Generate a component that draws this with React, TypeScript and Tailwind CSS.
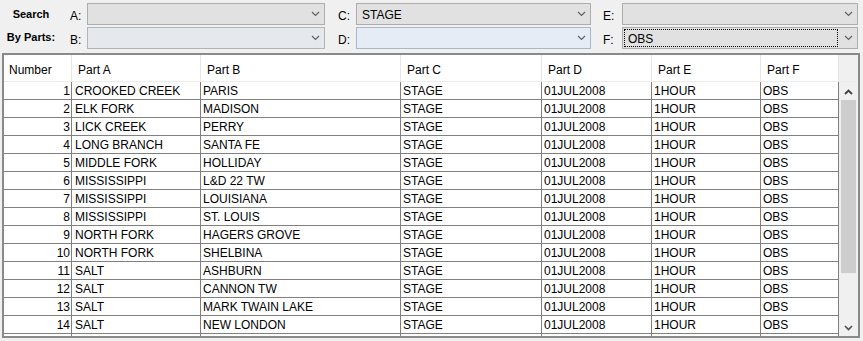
import React from 'react';

const rows: string[][] = [
  ['1', 'CROOKED CREEK', 'PARIS'],
  ['2', 'ELK FORK', 'MADISON'],
  ['3', 'LICK CREEK', 'PERRY'],
  ['4', 'LONG BRANCH', 'SANTA FE'],
  ['5', 'MIDDLE FORK', 'HOLLIDAY'],
  ['6', 'MISSISSIPPI', 'L&D 22 TW'],
  ['7', 'MISSISSIPPI', 'LOUISIANA'],
  ['8', 'MISSISSIPPI', 'ST. LOUIS'],
  ['9', 'NORTH FORK', 'HAGERS GROVE'],
  ['10', 'NORTH FORK', 'SHELBINA'],
  ['11', 'SALT', 'ASHBURN'],
  ['12', 'SALT', 'CANNON TW'],
  ['13', 'SALT', 'MARK TWAIN LAKE'],
  ['14', 'SALT', 'NEW LONDON'],
  ['', '', ''],
];

const columns = [
  { title: 'Number', width: 'w-[68px]', head: 'pl-[5px]' },
  { title: 'Part A', width: 'w-[129px]', head: 'pl-[6px]' },
  { title: 'Part B', width: 'w-[200px]', head: 'pl-[6px]' },
  { title: 'Part C', width: 'w-[141px]', head: 'pl-[6px]' },
  { title: 'Part D', width: 'w-[110px]', head: 'pl-[6px]' },
  { title: 'Part E', width: 'w-[109px]', head: 'pl-[6px]' },
  { title: 'Part F', width: 'w-[78px]', head: 'pl-[6px]' },
];

function ChevronDown({ color = '#606060', width = 1.2 }: { color?: string; width?: number }) {
  return (
    <svg width="9" height="6" viewBox="0 0 9 6">
      <path d="M1 1 L4.5 4.5 L8 1" fill="none" stroke={color} strokeWidth={width} />
    </svg>
  );
}

function ChevronUp({ color = '#404040', width = 1.8 }: { color?: string; width?: number }) {
  return (
    <svg width="9" height="6" viewBox="0 0 9 6">
      <path d="M1 5 L4.5 1.5 L8 5" fill="none" stroke={color} strokeWidth={width} />
    </svg>
  );
}

function Combo({
  value,
  bg = 'bg-[#e1e1e1]',
  border = 'border-[#adadad]',
  focused = false,
}: {
  value?: string;
  bg?: string;
  border?: string;
  focused?: boolean;
}) {
  return (
    <div className={`h-[22px] flex items-stretch border ${border} ${bg}`}>
      <div className="flex-1 p-[1px] flex">
        <div
          className={`flex-1 flex items-center pl-[3px] pt-[1px] text-[12px] text-black ${
            focused ? 'border border-dotted border-black' : 'border border-transparent'
          }`}
        >
          {value}
        </div>
      </div>
      <div className="w-[18px] flex items-center justify-center">
        <ChevronDown />
      </div>
    </div>
  );
}

function Label({ text }: { text: string }) {
  return <div className="text-[12px] text-black flex items-center pt-[3px]">{text}</div>;
}

export default function App() {
  return (
    <div
      className="w-[863px] h-[341px] bg-[#f0f0f0] overflow-hidden"
      style={{ fontFamily: '"Liberation Sans", Arial, sans-serif' }}
    >
      <div className="grid grid-cols-[70px_17px_238px_13px_18px_235px_12px_19px_236px] grid-rows-[22px_22px] gap-y-[2px] pt-[3px]">
        <div className="pr-[8px] text-center text-[11px] font-bold text-black flex items-center justify-center">
          Search
        </div>
        <Label text="A:" />
        <Combo />
        <div />
        <Label text="C:" />
        <Combo value="STAGE" />
        <div />
        <Label text="E:" />
        <Combo />

        <div className="pr-[8px] text-center text-[11px] font-bold text-black flex items-center justify-center pb-[2px]">
          By Parts:
        </div>
        <Label text="B:" />
        <Combo bg="bg-[#e5e9ee]" border="border-[#b0b4b8]" />
        <div />
        <Label text="D:" />
        <Combo bg="bg-[#e5ecf6]" border="border-[#a9b8c9]" />
        <div />
        <Label text="F:" />
        <Combo value="OBS" focused />
      </div>

      <div className="mt-[4px] ml-[2px] w-[858px] h-[285px] border-2 border-[#8a8a8a] flex flex-col bg-white">
        <div className="h-[27px] flex shrink-0 border-b border-[#ececec]">
          {columns.map((c) => (
            <div
              key={c.title}
              className={`${c.width} ${c.head} border-r border-[#e5e5e5] flex items-end pb-[2px] text-[12px] text-black`}
            >
              {c.title}
            </div>
          ))}
          <div className="flex-1 bg-[#f0f0f0]" />
        </div>

        <div className="flex flex-1 min-h-0">
          <div className="w-[835px] overflow-hidden">
            {rows.map((r, i) => (
              <div key={i} className="h-[18px] flex border-b border-[#808080] text-[12px] text-black leading-[19px]">
                <div className="w-[68px] border-r border-[#808080] text-right pr-[1px]">{r[0]}</div>
                <div className="w-[129px] border-r border-[#808080] pl-[3px]">{r[1]}</div>
                <div className="w-[200px] border-r border-[#808080] pl-[2px]">{r[2]}</div>
                <div className="w-[141px] border-r border-[#808080] pl-[2px]">{r[0] ? 'STAGE' : ''}</div>
                <div className="w-[110px] border-r border-[#808080] pl-[2px]">{r[0] ? '01JUL2008' : ''}</div>
                <div className="w-[109px] border-r border-[#808080] pl-[2px]">{r[0] ? '1HOUR' : ''}</div>
                <div className="w-[78px] border-r border-[#808080] pl-[2px]">{r[0] ? 'OBS' : ''}</div>
              </div>
            ))}
          </div>
          <div className="flex-1 bg-[#f0f0f0] grid grid-rows-[18px_173px_1fr_17px]">
            <div className="flex items-center justify-center pt-[1px]">
              <ChevronUp />
            </div>
            <div className="mx-[2px] bg-[#cdcdcd]" />
            <div />
            <div className="flex items-center justify-center">
              <ChevronDown color="#505050" width={1.6} />
            </div>
          </div>
        </div>
      </div>
    </div>
  );
}
